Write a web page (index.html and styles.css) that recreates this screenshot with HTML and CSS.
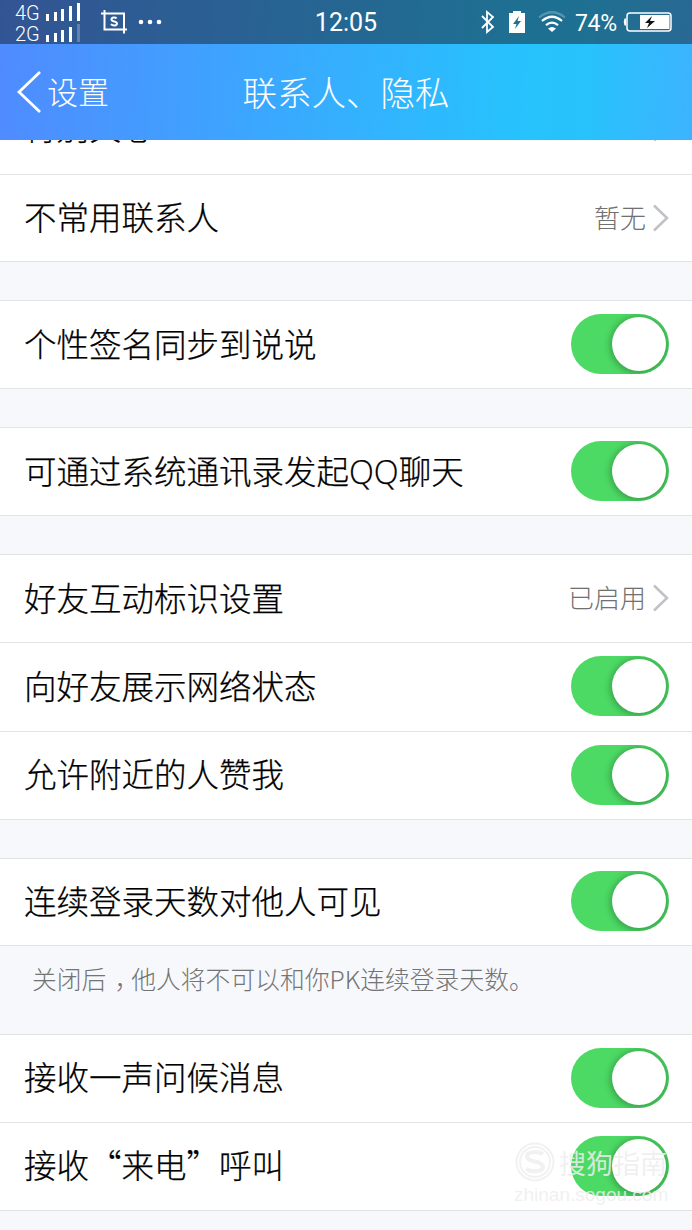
FILE: index.html
```html
<!DOCTYPE html>
<html lang="zh-CN">
<head>
    <meta charset="UTF-8">
    <meta name="viewport" content="width=device-width, initial-scale=1.0">
    <title>联系人、隐私</title>
    <link rel="stylesheet" href="styles.css">
</head>
<body>
    <div class="top">
        <div class="status">
            <div class="networks">
                <div class="network">
                    <span>4G</span>
                    <svg width="36" height="20" viewBox="0 0 36 20" fill="#fff">
                        <path d="M1 13h3v7H1zM9 11h3v9H9zM16 8h3v12h-3zM24 5h3v15h-3zM32 2h3v18h-3z"/>
                    </svg>
                </div>
                <div class="network">
                    <span>2G</span>
                    <svg width="36" height="20" viewBox="0 0 36 20" fill="#fff">
                        <path d="M1 13h3v7H1zM9 11h3v9H9zM16 8h3v12h-3zM24 5h3v15h-3z"/>
                        <path d="M32 2h3v18h-3z" opacity="0.25"/>
                    </svg>
                </div>
            </div>
            <svg class="crop" width="26" height="24" viewBox="0 0 26 24" fill="none" stroke="#fff" stroke-width="2">
                <path d="M0 3.500h23v20M3.500 0v19.500h23"/>
                <path d="M15.500 8.500c-1-1.500-5-1.500-5 1s5.500 1.500 5.500 4-4.500 2.500-6 .5"/>
            </svg>
            <svg class="dots" width="24" height="6" viewBox="0 0 24 6" fill="#fff">
                <circle cx="3" cy="3" r="2.300"/><circle cx="12" cy="3" r="2.300"/><circle cx="21" cy="3" r="2.300"/>
            </svg>
            <span class="clock">12:05</span>
            <div class="indicators">
                <svg width="16" height="26" viewBox="0 0 16 26" fill="none" stroke="#fff" stroke-width="1.800">
                    <path d="M2 7l11 11-6 5V3l6 5L2 19"/>
                </svg>
                <svg class="saver" width="16" height="22" viewBox="0 0 16 22">
                    <path d="M0 2h4V0h8v2h4v20H0z" fill="#fff"/>
                    <path d="M10 5l-6 8h3.500L6 18l6-8H8.500z" fill="#1c7394"/>
                </svg>
                <svg class="wifi" width="28" height="22" viewBox="0 0 28 22" fill="none" stroke="#fff" stroke-width="2.200">
                    <path d="M1 6.500Q14-4 27 6.500" opacity="0.25"/>
                    <path d="M4 10Q14 1.500 24 10M8 14.200Q14 9 20 14.200"/>
                    <path d="M10 17.500Q14 14.500 18 17.500L14 21z" fill="#fff" stroke="none"/>
                </svg>
                <span class="percent">74%</span>
                <svg class="battery" width="50" height="20" viewBox="0 0 50 20">
                    <path d="M3 6.500H1.500Q0 10 1.500 13.500H3z" fill="#fff"/>
                    <rect x="4" y="1" width="44" height="18" rx="3" fill="none" stroke="#fff" stroke-width="1.500"/>
                    <path d="M17 3h29.500v14H17z" fill="#fff"/>
                    <path d="M29 4l-7 7h4l-2 5 8-7h-5z" fill="#111"/>
                </svg>
            </div>
        </div>
        <div class="header">
            <div class="back">
                <svg width="26" height="44" viewBox="0 0 26 44" fill="none" stroke="#fff" stroke-width="2.800">
                    <path d="M24 2L3 22l21 20"/>
                </svg>
                <span>设置</span>
            </div>
            <div class="title">联系人、隐私</div>
        </div>
    </div>
    <div class="list">
        <div class="group first">
            <div class="row clipped">
                <span class="label">特别关心</span>
                <svg class="arrow" width="16" height="28" viewBox="0 0 16 28"><path d="M1 1.500L14 14 1 26.500"/></svg>
            </div>
            <div class="row short">
                <span class="label">不常用联系人</span>
                <span class="value">暂无</span>
                <svg class="arrow" width="16" height="28" viewBox="0 0 16 28"><path d="M1 1.500L14 14 1 26.500"/></svg>
            </div>
        </div>
        <div class="group">
            <div class="row">
                <span class="label">个性签名同步到说说</span>
                <div class="switch"><div class="knob"></div></div>
            </div>
        </div>
        <div class="group">
            <div class="row">
                <span class="label">可通过系统通讯录发起<span class="latin">QQ</span>聊天</span>
                <div class="switch"><div class="knob"></div></div>
            </div>
        </div>
        <div class="group friends">
            <div class="row">
                <span class="label">好友互动标识设置</span>
                <span class="value">已启用</span>
                <svg class="arrow" width="16" height="28" viewBox="0 0 16 28"><path d="M1 1.500L14 14 1 26.500"/></svg>
            </div>
            <div class="row">
                <span class="label">向好友展示网络状态</span>
                <div class="switch"><div class="knob"></div></div>
            </div>
            <div class="row">
                <span class="label">允许附近的人赞我</span>
                <div class="switch"><div class="knob"></div></div>
            </div>
        </div>
        <div class="group login">
            <div class="row short">
                <span class="label">连续登录天数对他人可见</span>
                <div class="switch"><div class="knob"></div></div>
            </div>
        </div>
        <div class="note">关闭后<span class="comma">，</span>他人将不可以和你PK连续登录天数。</div>
        <div class="group">
            <div class="row">
                <span class="label">接收一声问候消息</span>
                <div class="switch"><div class="knob"></div></div>
            </div>
            <div class="row">
                <span class="label">接收“来电”呼叫</span>
                <div class="switch"><div class="knob"></div></div>
            </div>
        </div>
    </div>
    <div class="watermark">
        <div class="brand">
            <svg width="42" height="42" viewBox="0 0 42 42" fill="none">
                <circle cx="21" cy="21" r="18.500" stroke="currentColor" stroke-width="2"/>
                <circle cx="21" cy="21" r="15" stroke="currentColor" stroke-width="2"/>
                <path d="M29 13c-5-3-16-2.500-16 2.500 0 6 16 4 16 10.500 0 5-12 5.500-17 2" stroke="currentColor" stroke-width="4"/>
            </svg>
            <span>搜狗指南</span>
        </div>
        <div class="site">zhinan.sogou.com</div>
    </div>
</body>
</html>
```
FILE: styles.css
```css
* {
    box-sizing: border-box;
}
body {
    margin: 0;
    height: 1230px;
    overflow: hidden;
    position: relative;
    background: #f7f8fb;
    font-family: "Noto Sans CJK SC", sans-serif;
    font-weight: 300;
    color: #000;
}
svg {
    display: block;
    flex: none;
}
.top {
    height: 140px;
    color: #fff;
    background: linear-gradient(93deg, #508bff 0%, #26c3fd 76%, #28c2fc 85%, #3db3ff 100%);
}
.status {
    height: 44px;
    display: flex;
    align-items: center;
    position: relative;
    padding: 0 19px 0 15px;
    background: rgba(22, 30, 40, 0.5);
    font-family: Roboto, sans-serif;
    font-weight: 400;
}
.networks {
    width: 66px;
}
.network {
    display: flex;
    justify-content: space-between;
    height: 21px;
    font-size: 20px;
    font-weight: 300;
    line-height: 25px;
}
.crop {
    margin-left: 20px;
}
.dots {
    margin-left: 11px;
}
.clock {
    position: absolute;
    left: 0;
    right: 0;
    text-align: center;
    font-size: 25px;
    line-height: 46px;
    padding-top: 2px;
}
.indicators {
    display: flex;
    align-items: center;
    margin-left: auto;
}
.saver {
    margin-left: 13px;
}
.wifi {
    margin-left: 13px;
}
.percent {
    margin: 2px 6px 0 9px;
    font-size: 23px;
    letter-spacing: -0.2px;
}
.header {
    height: 96px;
    display: flex;
    align-items: center;
    position: relative;
    font-size: 31px;
}
.back {
    display: flex;
    align-items: center;
    padding-left: 16px;
}
.back span {
    margin-left: 5px;
    padding-bottom: 4px;
}
.title {
    position: absolute;
    left: 0;
    right: 0;
    padding-bottom: 3px;
    text-align: center;
    font-size: 34.5px;
}
.list {
    height: 1090px;
    overflow: hidden;
}
.group {
    margin-bottom: 38px;
    background: #fff;
    border-top: 1px solid #e1e3e7;
}
.group.first {
    margin-top: -54px;
}
.group.login {
    margin-bottom: 0;
}
.row {
    height: 88px;
    display: flex;
    align-items: center;
    padding: 0 23px 1px 24px;
    border-bottom: 1px solid #e1e3e7;
}
.row.clipped {
    padding-bottom: 6px;
}
.row.short {
    height: 87px;
}
.friends .row {
    height: 88.33px;
}
.label {
    flex: 1;
    padding-bottom: 4px;
    font-size: 32.5px;
    white-space: nowrap;
    -webkit-text-stroke: 0.25px #000;
}
.latin {
    font-family: "Open Sans", sans-serif;
    line-height: 1;
}
.value {
    margin-right: 7px;
    padding-bottom: 3px;
    font-size: 26px;
    color: #707070;
}
.arrow {
    fill: none;
    stroke: #c2c2c6;
    stroke-width: 2.6;
}
.switch {
    width: 98px;
    height: 60px;
    padding: 3px;
    display: flex;
    justify-content: flex-end;
    border-radius: 30px;
    background: #4cd964;
    overflow: hidden;
}
.knob {
    width: 54px;
    height: 54px;
    border-radius: 50%;
    background: #fff;
    box-shadow: 0 1px 6px 2px rgba(0, 0, 0, 0.25);
}
.note {
    height: 88px;
    padding: 14px 32px 0;
    font-size: 24.8px;
    color: #747474;
}
.comma {
    padding-left: 8px;
    margin-right: -8px;
}
.watermark {
    position: absolute;
    left: 514px;
    top: 1140px;
    color: rgba(238, 238, 238, 0.85);
    font-weight: 400;
}
.brand {
    display: flex;
    align-items: center;
    height: 44px;
    font-size: 27px;
}
.brand span {
    margin-left: 3px;
}
.site {
    font-family: "Liberation Sans", sans-serif;
    font-size: 19px;
    line-height: 22px;
}
```
